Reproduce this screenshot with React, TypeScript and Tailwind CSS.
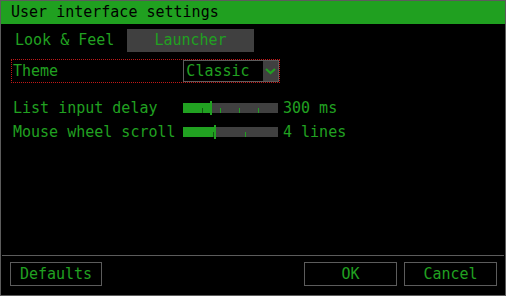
import React from 'react';

const GREEN = 'text-[#21a121]';

const Slider: React.FC<{ fill: number; ticks: number[] }> = ({ fill, ticks }) => (
  <div className="relative w-[95px] h-[10px] bg-[#404040]">
    <div className="absolute left-0 top-0 h-full bg-[#21a121]" style={{ width: fill }} />
    {ticks.map((t) => (
      <div
        key={t}
        className={`absolute bottom-0 w-px h-[5px] ${t < fill ? 'bg-[#145814]' : 'bg-[#21a121]'}`}
        style={{ left: t }}
      />
    ))}
    <div className="absolute top-[-2px] w-[2px] h-[14px] bg-[#21a121]" style={{ left: fill }} />
  </div>
);

const SliderRow: React.FC<{ label: string; value: string; fill: number; ticks: number[] }> = ({
  label,
  value,
  fill,
  ticks,
}) => (
  <div className="flex items-center h-[24px] pl-[12px]">
    <span className="w-[170px]">{label}</span>
    <Slider fill={fill} ticks={ticks} />
    <span className="ml-[5px]">{value}</span>
  </div>
);

const Button: React.FC<{ label: string; className?: string }> = ({ label, className }) => (
  <button className={`h-[24px] border border-[#5c5c5c] flex items-center justify-center ${className ?? ''}`}>
    {label}
  </button>
);

export default function App() {
  return (
    <div
      className={`w-[506px] h-[296px] bg-black border border-[#5c5c5c] flex flex-col text-[15px] leading-none ${GREEN}`}
      style={{ fontFamily: '"DejaVu Sans Mono", "Liberation Mono", monospace' }}
    >
      {/* Title bar */}
      <div className="h-[23px] bg-[#20a020] text-black flex items-center pl-[10px]">
        User interface settings
      </div>

      {/* Tabs */}
      <div className="flex items-center mt-[5px] pl-[14px]">
        <span className="w-[112px]">Look &amp; Feel</span>
        <div className="w-[127px] h-[23px] bg-[#404040] flex items-center justify-center">Launcher</div>
      </div>

      {/* Theme */}
      <div className="mt-[7px] ml-[10px] w-[269px] h-[24px] border border-dotted border-[#c01818] flex items-center pl-[1px]">
        <span className="w-[171px]">Theme</span>
        <div className="w-[96px] h-[22px] border border-[#5c5c5c] flex items-center">
          <span className="flex-1 pl-[2px]">Classic</span>
          <div className="w-[15px] h-full bg-[#404040] flex items-center justify-center">
            <svg width="11" height="8" viewBox="0 0 11 8">
              <polyline points="1,2 5.5,6 10,2" fill="none" stroke="#21a121" strokeWidth="2.2" />
            </svg>
          </div>
        </div>
      </div>

      {/* Sliders */}
      <div className="mt-[13px] flex flex-col">
        <SliderRow label="List input delay" value="300 ms" fill={27} ticks={[19, 37, 56, 75]} />
        <SliderRow label="Mouse wheel scroll" value="4 lines" fill={31} ticks={[30, 62]} />
      </div>

      {/* Footer */}
      <div className="mt-auto mx-[1px] border-t border-[#5c5c5c] pt-[6px] pb-[9px] flex items-center">
        <Button label="Defaults" className="w-[92px] ml-[8px]" />
        <div className="ml-auto flex gap-[7px] mr-[7px]">
          <Button label="OK" className="w-[93px]" />
          <Button label="Cancel" className="w-[93px]" />
        </div>
      </div>
    </div>
  );
}
